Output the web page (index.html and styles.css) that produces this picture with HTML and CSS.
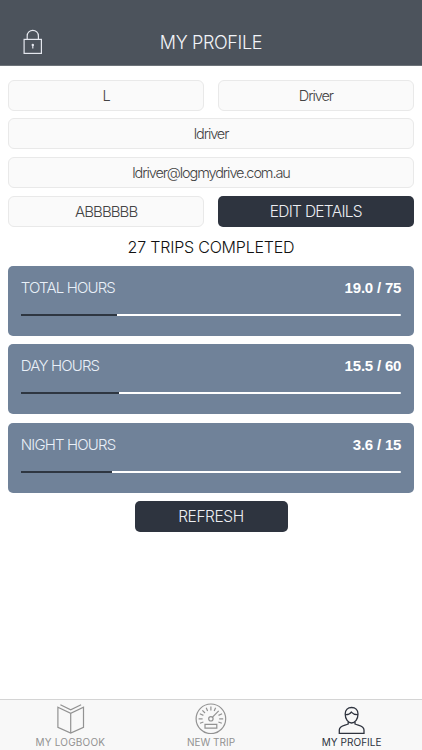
FILE: index.html
```
<!DOCTYPE html>
<html lang="en">
<head>
<meta charset="utf-8">
<title>My Profile</title>
<link rel="stylesheet" href="styles.css">
</head>
<body>
<div class="app">
  <header class="header">
    <svg class="lock" width="20" height="26" viewBox="0 0 20 26" fill="none" stroke="#e4e7ee" stroke-width="1.2">
      <rect x="1.1" y="10.400" width="17.300" height="14"/>
      <path d="M4.200 10.400V6.900a5.600 5.600 0 0 1 11.200 0v3.500"/>
      <circle cx="9.800" cy="15.900" r="1.200" fill="#e4e7ee" stroke="none"/>
      <path d="M9.800 16v3.500"/>
    </svg>
    <h1 class="title">MY PROFILE</h1>
  </header>
  <main class="content">
    <section class="details">
      <div class="field">L</div>
      <div class="field">Driver</div>
      <div class="field wide">ldriver</div>
      <div class="field wide">ldriver@logmydrive.com.au</div>
      <div class="field plate">ABBBBBB</div>
      <button class="button edit">EDIT DETAILS</button>
    </section>
    <h2 class="summary">27 TRIPS COMPLETED</h2>
    <section class="cards">
      <div class="card">
        <div class="row"><span class="label">TOTAL HOURS</span><span class="value">19.0 / 75</span></div>
        <div class="bar"><div class="fill" style="width:25.3%"></div></div>
      </div>
      <div class="card">
        <div class="row"><span class="label">DAY HOURS</span><span class="value">15.5 / 60</span></div>
        <div class="bar"><div class="fill" style="width:25.9%"></div></div>
      </div>
      <div class="card">
        <div class="row"><span class="label">NIGHT HOURS</span><span class="value">3.6 / 15</span></div>
        <div class="bar"><div class="fill" style="width:24%"></div></div>
      </div>
    </section>
    <button class="button refresh">REFRESH</button>
  </main>
  <nav class="tabs">
    <a class="tab logbook">
      <svg width="34" height="34" viewBox="0 0 34 34" fill="none" stroke="#929292" stroke-width="1.2">
        <path d="M4.900 7.200 17.700 13.300l12.800-6.100v20.200L17.700 33 4.900 27.400zM17.700 13.300V33M7.400 4.700l10.300 5.200 10.400-5.200"/>
      </svg>
      <span>MY LOGBOOK</span>
    </a>
    <a class="tab trip">
      <svg width="34" height="34" viewBox="0 0 34 34" fill="none" stroke="#929292" stroke-width="1.2">
        <circle cx="16.900" cy="18.800" r="14.800"/>
        <circle cx="16.900" cy="18.800" r="2.200"/>
        <path d="M18.500 17.200 24.700 10.800M11 24.300h11.800v3.800H11zM4.600 18.800h4M25.200 18.800h4M5.800 13.800l3.600 1.600M24.500 15.400l3.600-1.600M8.400 10.300l2.600 2.700M12.200 7.700l1.400 3.400M16.900 6.600v4M21.600 7.700l-1.400 3.400M6 23.300l3.400-1.300M27.800 23.300l-3.400-1.300"/>
      </svg>
      <span>NEW TRIP</span>
    </a>
    <a class="tab profile active">
      <svg width="34" height="34" viewBox="0 0 34 34" fill="none" stroke="#2e333e" stroke-width="1.300">
        <path d="M10.200 14c0-4.200 2.600-6.500 6.400-6.500S23 9.800 23 14c0 5.200-2.900 9-6.400 9s-6.400-3.800-6.400-9z"/>
        <path d="M10.300 14.600c2.700.2 4.800-.7 6-2.500 1.600 1.800 3.900 2.700 6.600 2.500M13.200 21.700V24c-3.600 1.700-8.900 1.700-8.900 6v3.300H29V30c0-4.300-5.500-4.300-9-6v-2.300"/>
      </svg>
      <span>MY PROFILE</span>
    </a>
  </nav>
</div>
</body>
</html>
```
FILE: styles.css
```
* { box-sizing: border-box; }
body {
  margin: 0;
  background: #fff;
  font-family: Inter, "Liberation Sans", sans-serif;
  font-weight: 300;
}
.app {
  width: 422px;
  height: 750px;
  display: flex;
  flex-direction: column;
  overflow: hidden;
}
.header {
  height: 66px;
  flex: none;
  display: grid;
  grid-template-columns: 60px 1fr 60px;
  padding-top: 20px;
  background: #4c535c;
  border-bottom: 1px solid #6d7379;
}
.lock { margin: 9px 0 0 23px; }
.title {
  margin: 0;
  font-size: 18px;
  line-height: 45px;
  font-weight: 300;
  text-align: center;
  color: #f2f4f8;
  letter-spacing: -0.35px;
}
.content {
  flex: 1;
  display: flex;
  flex-direction: column;
  padding: 13.5px 8.3px 0;
}
.details {
  display: grid;
  grid-template-columns: 1fr 1fr;
  gap: 7.7px 14px;
}
.field {
  height: 31px;
  border: 1px solid #e9e9e9;
  border-radius: 6px;
  background: #fafafa;
  color: #444;
  font-size: 14.5px;
  line-height: 29px;
  text-align: center;
  letter-spacing: -1.1px;
}
.plate { font-size: 15px; letter-spacing: -0.9px; }
.wide { grid-column: span 2; }
.button {
  height: 31px;
  padding: 0;
  border: 0;
  border-radius: 5px;
  background: #2e343f;
  color: #eceef2;
  font-family: inherit;
  font-size: 15.5px;
  font-weight: 300;
  line-height: 31px;
  letter-spacing: -0.4px;
}
.edit { letter-spacing: -0.7px; }
.summary {
  margin: 0;
  height: 39.5px;
  font-size: 16px;
  line-height: 41px;
  font-weight: 300;
  text-align: center;
  color: #111;
  letter-spacing: -0.2px;
}
.cards {
  display: flex;
  flex-direction: column;
  gap: 8.3px;
}
.card {
  height: 70px;
  padding: 12px 12.5px 0;
  border-radius: 5px;
  background: #708299;
}
.row {
  display: flex;
  justify-content: space-between;
  height: 20px;
  font-size: 15px;
  line-height: 20px;
  color: #e9f0f8;
}
.label { letter-spacing: -0.85px; }
.value {
  font-family: "Liberation Sans", Arial, sans-serif;
  font-weight: 700;
  letter-spacing: -0.2px;
  color: #fff;
}
.bar {
  height: 2px;
  margin-top: 16px;
  background: #fff;
  border-radius: 1px;
}
.fill { height: 2px; background: #2e3641; }
.refresh {
  width: 153px;
  margin-top: 8px;
  align-self: center;
}
.tabs {
  flex: none;
  height: 51px;
  display: grid;
  grid-template-columns: repeat(3, 1fr);
  background: #f8f8f8;
  border-top: 1px solid #d4d4d4;
}
.tab {
  display: flex;
  flex-direction: column;
  align-items: center;
  color: #929292;
  font-size: 10px;
  line-height: 12px;
  font-weight: 400;
}
.tab span { margin-top: 2px; }
.logbook { letter-spacing: 0.2px; }
.trip { letter-spacing: 0; }
.profile { letter-spacing: 0.05px; }
.active { color: #2e333e; }
```
